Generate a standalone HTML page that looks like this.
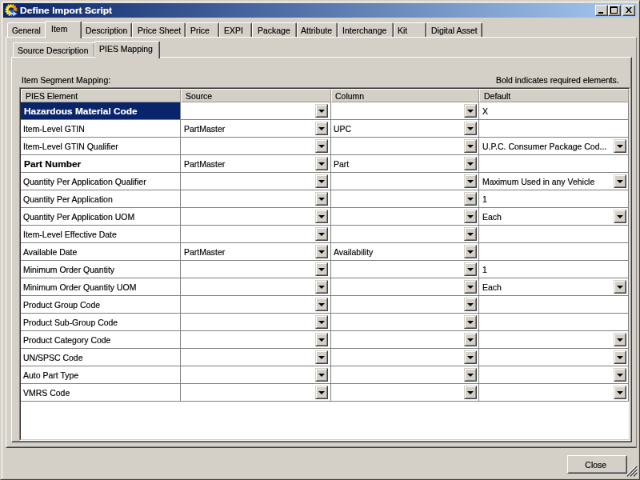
<!DOCTYPE html>
<html><head><meta charset="utf-8"><title>Define Import Script</title>
<style>
html,body{margin:0;padding:0;background:#d4d0c8;overflow:hidden}
body{width:640px;height:480px;font-family:"Liberation Sans",sans-serif;font-size:11px;color:#000}
#w{position:absolute;left:0;top:0;width:800px;height:600px;transform:scale(.8);transform-origin:0 0;background:#d4d0c8;will-change:transform}
#w div,#w span,#w i{position:absolute;box-sizing:border-box;white-space:nowrap}
.t{line-height:13px;height:13px;margin-top:.7px;-webkit-text-stroke:.18px;transform:scaleX(.952);transform-origin:0 50%}
.b{font-weight:bold;transform:scaleX(1.078)}
.tt{transform:scaleX(1.095)}
.r{transform-origin:100% 50%}
.frame{left:0;top:0;width:800px;height:600px;border:1px solid;border-color:#d4d0c8 #404040 #404040 #d4d0c8}
.frame2{left:2px;top:2px;width:797px;height:597px;border:1px solid;border-color:#fff #c4c0b8 #c4c0b8 #fff}
.title{left:4px;top:4px;width:792px;height:18px;background:linear-gradient(90deg,#0a246a 0%,#a6caf0 100%)}
.cap{top:6px;width:16px;height:14px;background:#d4d0c8;border:1px solid;border-color:#fff #404040 #404040 #fff}
.cap:after{content:"";position:absolute;left:0;top:0;right:0;bottom:0;border:1px solid;border-color:#d4d0c8 #808080 #808080 #d4d0c8}
.pane{border:1px solid;border-color:#fff #404040 #404040 #fff}
.pane:after{content:"";position:absolute;left:0;top:0;right:0;bottom:0;border:1px solid;border-color:#d4d0c8 #808080 #808080 #d4d0c8}
.po{border-right-color:#808080}.po:after{border-right-color:#d4d0c8}
.tab{background:#d4d0c8;border:1px solid;border-color:#fff #404040 transparent #fff;border-bottom:none;border-radius:2px 2px 0 0}
.tab:after{content:"";position:absolute;left:0;top:0;right:0;bottom:0;border-right:1px solid #808080}
.grid{background:#fff;border:1px solid;border-color:#808080 #fff #fff #808080}
.grid:after{content:"";position:absolute;left:0;top:0;right:0;bottom:0;border:1px solid;border-color:#303030 #d4d0c8 #d4d0c8 #303030;pointer-events:none}
.hd{background:#d4d0c8;border:1px solid;border-color:#fff #9c9890 #9c9890 #fff;height:17px}
.hl{background:#808080;height:1px}
.vl{background:#808080;width:1px}
.dd{width:16px;height:17px;background:#d4d0c8;border:1px solid;border-color:#d4d0c8 #404040 #404040 #d4d0c8}
.dd:after{content:"";position:absolute;left:0;top:0;right:0;bottom:0;border:1px solid;border-color:#fff #808080 #808080 #fff}
.dd i{left:3px;top:5.5px;width:0;height:0;border:4px solid transparent;border-top:4px solid #000;border-bottom:none}
.btn{background:#d4d0c8;border:1px solid;border-color:#fff #404040 #404040 #fff}
.btn:after{content:"";position:absolute;left:0;top:0;right:0;bottom:0;border:1px solid;border-color:#d4d0c8 #808080 #808080 #d4d0c8}
</style></head><body><div id="w">
<div class="frame"></div><div class="frame2"></div>
<div class="title"></div>

<svg style="position:absolute;left:6px;top:5px" width="16" height="16" viewBox="0 0 16 16">
<defs><linearGradient id="g" x1="0" y1="0" x2="1" y2="0"><stop offset="0" stop-color="#ffee20"/><stop offset=".5" stop-color="#ffcc20"/><stop offset="1" stop-color="#f08818"/></linearGradient>
<linearGradient id="a" x1="0" y1="0" x2="1" y2="1"><stop offset="0" stop-color="#ffffff"/><stop offset="1" stop-color="#9cc0ff"/></linearGradient>
<linearGradient id="h" x1="0" y1="0" x2="0" y2="1"><stop offset="0.2" stop-color="#0a246a"/><stop offset=".8" stop-color="#3a70d8"/></linearGradient>
<clipPath id="c"><path d="M8 7.5L16 9.5V0H0V16H8.6Z"/></clipPath></defs>
<circle cx="8.2" cy="8" r="2.9" fill="url(#h)"/>
<g clip-path="url(#c)"><circle cx="8" cy="7.5" r="4.9" fill="none" stroke="url(#g)" stroke-width="3.4"/>
<circle cx="8" cy="7.5" r="7" fill="none" stroke="url(#g)" stroke-width="1.5" stroke-dasharray="1.7 1.44"/></g>
<path d="M4.6 8.6C4.8 11.8 7 13.5 10.4 13.4L10.4 15.4L15.4 12.1L10.2 9.2L10.3 11.2C8.2 11.2 6.9 10.3 6.6 8.3Z" fill="url(#a)" stroke="#4c7ce0" stroke-width=".5"/>
</svg>
<span class="t b tt" style="left:25px;top:6px;color:#fff;font-size:11px">Define Import Script</span>
<div class="cap" style="left:744px"><i style="left:3px;top:8px;width:6px;height:2px;background:#000"></i></div>
<div class="cap" style="left:760px"><i style="left:2px;top:1px;width:9px;height:9px;border:1px solid #000;border-top-width:2px"></i></div>
<div class="cap" style="left:778px"><svg style="position:absolute;left:3px;top:2px" width="8" height="7" viewBox="0 0 8 7"><path d="M0 0h2l2 2.5 2-2.5h2l-3 3.5 3 3.5h-2l-2-2.5-2 2.5h-2l3-3.5z" fill="#000"/></svg></div>
<div class="pane po" style="left:7px;top:46px;width:789px;height:514px"></div>
<div class="tab" style="left:9px;top:28px;width:50px;height:18px"></div><span class="t" style="left:15px;top:31px;transform:scaleX(.915)">General</span>
<div class="tab" style="left:100px;top:28px;width:65.19999999999999px;height:18px"></div><span class="t" style="left:106.8px;top:31px">Description</span>
<div class="tab" style="left:165.2px;top:28px;width:67.20000000000002px;height:18px"></div><span class="t" style="left:171.5px;top:31px">Price Sheet</span>
<div class="tab" style="left:232.4px;top:28px;width:41.599999999999994px;height:18px"></div><span class="t" style="left:237.75px;top:31px">Price</span>
<div class="tab" style="left:274px;top:28px;width:41.39999999999998px;height:18px"></div><span class="t" style="left:280.3px;top:31px">EXPI</span>
<div class="tab" style="left:315.4px;top:28px;width:55.60000000000002px;height:18px"></div><span class="t" style="left:321.6px;top:31px">Package</span>
<div class="tab" style="left:371px;top:28px;width:51px;height:18px"></div><span class="t" style="left:376.3px;top:31px">Attribute</span>
<div class="tab" style="left:422px;top:28px;width:69.80000000000001px;height:18px"></div><span class="t" style="left:427.6px;top:31px">Interchange</span>
<div class="tab" style="left:491.8px;top:28px;width:40.80000000000001px;height:18px"></div><span class="t" style="left:496.8px;top:31px">Kit</span>
<div class="tab" style="left:532.6px;top:28px;width:70.10000000000002px;height:18px"></div><span class="t" style="left:538.6px;top:31px">Digital Asset</span>
<div class="tab" style="left:56px;top:26px;width:46px;height:22px"></div><span class="t" style="left:64px;top:29px">Item</span>
<div class="pane" style="left:14px;top:71px;width:776px;height:482px"></div>
<div class="tab" style="left:16px;top:53px;width:103px;height:18px"></div><span class="t" style="left:22px;top:56px">Source Description</span>
<div class="tab" style="left:118px;top:51px;width:82px;height:22px"></div><span class="t" style="left:124px;top:54px">PIES Mapping</span>
<span class="t" style="left:27px;top:93px">Item Segment Mapping:</span>
<span class="t r" style="right:26.4px;top:93px;transform:scaleX(.944)">Bold indicates required elements.</span>
<div class="grid" style="left:24px;top:109px;width:764px;height:442px"></div>
<div class="hd" style="left:26px;top:111px;width:200px"></div><span class="t" style="left:31.75px;top:113px">PIES Element</span>
<div class="hd" style="left:226px;top:111px;width:187.7px"></div><span class="t" style="left:232.4px;top:113px">Source</span>
<div class="hd" style="left:413.7px;top:111px;width:185.50000000000006px"></div><span class="t" style="left:419.4px;top:113px">Column</span>
<div class="hd" style="left:599.2px;top:111px;width:186.79999999999995px"></div><span class="t" style="left:605.4px;top:113px">Default</span>
<div style="left:26px;top:128px;width:199px;height:21px;background:#0a246a"></div>
<span class="t b" style="left:30px;top:132px;color:#fff">Hazardous Material Code</span>
<span class="t" style="left:603.2px;top:132px">X</span>
<div class="dd" style="left:393.6px;top:130px"><i></i></div>
<div class="dd" style="left:579.6px;top:130px"><i></i></div>
<div class="hl" style="left:26px;top:149px;width:760px"></div>
<span class="t" style="left:29px;top:154px">Item-Level GTIN</span>
<span class="t" style="left:230px;top:154px">PartMaster</span>
<span class="t" style="left:417.3px;top:154px">UPC</span>
<div class="dd" style="left:393.6px;top:152px"><i></i></div>
<div class="dd" style="left:579.6px;top:152px"><i></i></div>
<div class="hl" style="left:26px;top:171px;width:760px"></div>
<span class="t" style="left:29px;top:176px">Item-Level GTIN Qualifier</span>
<span class="t" style="left:603.2px;top:176px">U.P.C. Consumer Package Cod...</span>
<div class="dd" style="left:393.6px;top:174px"><i></i></div>
<div class="dd" style="left:579.6px;top:174px"><i></i></div>
<div class="dd" style="left:767px;top:174px"><i></i></div>
<div class="hl" style="left:26px;top:193px;width:760px"></div>
<span class="t b" style="left:30px;top:198px">Part Number</span>
<span class="t" style="left:230px;top:198px">PartMaster</span>
<span class="t" style="left:417.3px;top:198px">Part</span>
<div class="dd" style="left:393.6px;top:196px"><i></i></div>
<div class="dd" style="left:579.6px;top:196px"><i></i></div>
<div class="hl" style="left:26px;top:215px;width:760px"></div>
<span class="t" style="left:29px;top:220px">Quantity Per Application Qualifier</span>
<span class="t" style="left:603.2px;top:220px">Maximum Used in any Vehicle</span>
<div class="dd" style="left:393.6px;top:218px"><i></i></div>
<div class="dd" style="left:579.6px;top:218px"><i></i></div>
<div class="dd" style="left:767px;top:218px"><i></i></div>
<div class="hl" style="left:26px;top:237px;width:760px"></div>
<span class="t" style="left:29px;top:242px">Quantity Per Application</span>
<span class="t" style="left:603.2px;top:242px">1</span>
<div class="dd" style="left:393.6px;top:240px"><i></i></div>
<div class="dd" style="left:579.6px;top:240px"><i></i></div>
<div class="hl" style="left:26px;top:259px;width:760px"></div>
<span class="t" style="left:29px;top:264px">Quantity Per Application UOM</span>
<span class="t" style="left:603.2px;top:264px">Each</span>
<div class="dd" style="left:393.6px;top:262px"><i></i></div>
<div class="dd" style="left:579.6px;top:262px"><i></i></div>
<div class="dd" style="left:767px;top:262px"><i></i></div>
<div class="hl" style="left:26px;top:281px;width:760px"></div>
<span class="t" style="left:29px;top:286px">Item-Level Effective Date</span>
<div class="dd" style="left:393.6px;top:284px"><i></i></div>
<div class="dd" style="left:579.6px;top:284px"><i></i></div>
<div class="hl" style="left:26px;top:303px;width:760px"></div>
<span class="t" style="left:29px;top:308px">Available Date</span>
<span class="t" style="left:230px;top:308px">PartMaster</span>
<span class="t" style="left:417.3px;top:308px">Availability</span>
<div class="dd" style="left:393.6px;top:306px"><i></i></div>
<div class="dd" style="left:579.6px;top:306px"><i></i></div>
<div class="hl" style="left:26px;top:325px;width:760px"></div>
<span class="t" style="left:29px;top:330px">Minimum Order Quantity</span>
<span class="t" style="left:603.2px;top:330px">1</span>
<div class="dd" style="left:393.6px;top:328px"><i></i></div>
<div class="dd" style="left:579.6px;top:328px"><i></i></div>
<div class="hl" style="left:26px;top:347px;width:760px"></div>
<span class="t" style="left:29px;top:352px">Minimum Order Quantity UOM</span>
<span class="t" style="left:603.2px;top:352px">Each</span>
<div class="dd" style="left:393.6px;top:350px"><i></i></div>
<div class="dd" style="left:579.6px;top:350px"><i></i></div>
<div class="dd" style="left:767px;top:350px"><i></i></div>
<div class="hl" style="left:26px;top:369px;width:760px"></div>
<span class="t" style="left:29px;top:374px">Product Group Code</span>
<div class="dd" style="left:393.6px;top:372px"><i></i></div>
<div class="dd" style="left:579.6px;top:372px"><i></i></div>
<div class="hl" style="left:26px;top:391px;width:760px"></div>
<span class="t" style="left:29px;top:396px">Product Sub-Group Code</span>
<div class="dd" style="left:393.6px;top:394px"><i></i></div>
<div class="dd" style="left:579.6px;top:394px"><i></i></div>
<div class="hl" style="left:26px;top:413px;width:760px"></div>
<span class="t" style="left:29px;top:418px">Product Category Code</span>
<div class="dd" style="left:393.6px;top:416px"><i></i></div>
<div class="dd" style="left:579.6px;top:416px"><i></i></div>
<div class="dd" style="left:767px;top:416px"><i></i></div>
<div class="hl" style="left:26px;top:435px;width:760px"></div>
<span class="t" style="left:29px;top:440px">UN/SPSC Code</span>
<div class="dd" style="left:393.6px;top:438px"><i></i></div>
<div class="dd" style="left:579.6px;top:438px"><i></i></div>
<div class="dd" style="left:767px;top:438px"><i></i></div>
<div class="hl" style="left:26px;top:457px;width:760px"></div>
<span class="t" style="left:29px;top:462px">Auto Part Type</span>
<div class="dd" style="left:393.6px;top:460px"><i></i></div>
<div class="dd" style="left:579.6px;top:460px"><i></i></div>
<div class="dd" style="left:767px;top:460px"><i></i></div>
<div class="hl" style="left:26px;top:479px;width:760px"></div>
<span class="t" style="left:29px;top:484px">VMRS Code</span>
<div class="dd" style="left:393.6px;top:482px"><i></i></div>
<div class="dd" style="left:579.6px;top:482px"><i></i></div>
<div class="dd" style="left:767px;top:482px"><i></i></div>
<div class="hl" style="left:26px;top:501px;width:760px"></div>
<div class="vl" style="left:225px;top:128px;height:374px"></div>
<div class="vl" style="left:412.7px;top:128px;height:374px"></div>
<div class="vl" style="left:598.2px;top:128px;height:374px"></div>
<div class="vl" style="left:785px;top:128px;height:374px"></div>
<div class="btn" style="left:709px;top:569px;width:75px;height:23px"></div><span class="t" style="left:709px;width:75px;text-align:center;top:574px">Close</span>
<svg style="position:absolute;left:783px;top:582px" width="14" height="14" viewBox="0 0 14 14"><path d="M13 -.4L-.4 13M13 3.6L3.6 13M13 7.6L7.6 13" stroke="#fff" stroke-width="1.3"/><path d="M13.4 .8L.8 13.4M13.4 4.8L4.8 13.4M13.4 8.8L8.8 13.4" stroke="#484848" stroke-width="1.5"/></svg>
</div></body></html>
